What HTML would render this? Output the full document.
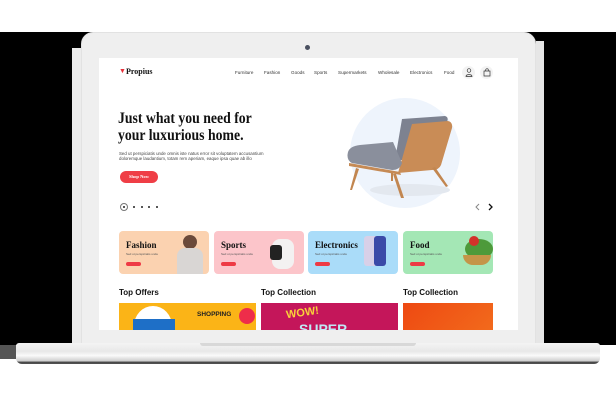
<!DOCTYPE html>
<html><head><meta charset="utf-8"><style>
*{margin:0;padding:0;box-sizing:border-box}
body{width:616px;height:400px;background:#fff;position:relative;overflow:hidden;font-family:"Liberation Sans",sans-serif}
.a{position:absolute}
.serif{font-family:"Liberation Serif",serif;font-weight:bold;color:#111}
.nav span{position:absolute;top:70px;font-size:4.6px;color:#333;white-space:nowrap}
.card{position:absolute;top:231px;width:90px;height:43px;border-radius:4px;overflow:hidden}
.card .t{position:absolute;left:7px;top:9px;font-family:"Liberation Serif",serif;font-weight:bold;font-size:9px;color:#111}
.card .s{position:absolute;left:7px;top:21px;font-size:3px;color:#555}
.card .b{position:absolute;left:7px;top:31px;width:15px;height:4px;border-radius:2px;background:#ee3a45}
.sec{position:absolute;top:288px;font-size:8px;font-weight:bold;color:#111}
</style></head><body>
<div class="a" style="left:0;top:32px;width:616px;height:313px;background:#000"></div>
<div class="a" style="left:0;top:345px;width:16px;height:14px;background:#555"></div>
<div class="a" style="left:72px;top:48px;width:9px;height:297px;background:#ececec"></div>
<div class="a" style="left:536px;top:41px;width:8px;height:304px;background:#e6e6e6"></div>
<div class="a" style="left:81px;top:32px;width:455px;height:313px;background:#efefef;border-radius:12px 12px 0 0;border:1px solid #e2e2e2"></div>
<div class="a" style="left:305px;top:45px;width:5px;height:5px;border-radius:50%;background:#4a5060"></div>
<div class="a" style="left:16px;top:343px;width:584px;height:21px;background:linear-gradient(#f4f4f4,#e8e8e8 40%,#fafafa 60%,#cfcfcf 85%,#444 92%,#555);border-radius:3px 3px 6px 6px"></div>
<div class="a" style="left:200px;top:343px;width:216px;height:3px;background:#d8d8d8;border-radius:0 0 4px 4px"></div>
<div class="a" style="left:99px;top:58px;width:419px;height:272px;background:#fff;overflow:hidden"></div>
<div class="a" style="left:119px;top:68px;color:#e8303a;font-size:7px">&#9660;</div>
<div class="a serif" style="left:126px;top:67px;font-size:8px">Propius</div>
<div class="nav">
<span style="left:235px">Furniture</span><span style="left:264px">Fashion</span><span style="left:291px">Goods</span><span style="left:314px">Sports</span><span style="left:338px">Supermarkets</span><span style="left:378px">Wholesale</span><span style="left:410px">Electronics</span><span style="left:444px">Food</span>
</div>
<div class="a" style="left:462px;top:66px;width:13px;height:13px;border-radius:50%;background:#f3f3f3"></div>
<svg class="a" style="left:465px;top:68px" width="8" height="9" viewBox="0 0 8 9"><circle cx="4" cy="2.5" r="1.8" fill="none" stroke="#333" stroke-width=".7"/><path d="M1 8.5c0-2.5 6-2.5 6 0z" fill="none" stroke="#333" stroke-width=".7"/></svg>
<div class="a" style="left:480px;top:66px;width:13px;height:13px;border-radius:50%;background:#f3f3f3"></div>
<svg class="a" style="left:483px;top:68px" width="8" height="9" viewBox="0 0 8 9"><path d="M1 3h6v5H1z M2.7 3V2a1.3 1.3 0 0 1 2.6 0v1" fill="none" stroke="#333" stroke-width=".7"/></svg>
<div class="a serif" style="left:118px;top:110px;font-size:16px;line-height:17px;white-space:nowrap;transform:scaleX(.86);transform-origin:left top">Just what you need for<br>your luxurious home.</div>
<div class="a" style="left:119px;top:151px;font-size:4.4px;line-height:5.4px;color:#444;white-space:nowrap">Sed ut perspiciatis unde omnis iste natus error sit voluptatem accusantium<br>doloremque laudantium, totam rem aperiam, eaque ipsa quae ab illo</div>
<div class="a" style="left:120px;top:171px;width:38px;height:12px;border-radius:6px;background:#ef3e46;color:#fff;font-family:'Liberation Serif',serif;font-size:4.6px;font-weight:bold;text-align:center;line-height:12px">Shop Now</div>
<div class="a" style="left:120px;top:203px;width:8px;height:8px;border-radius:50%;border:.7px solid #777"></div>
<div class="a" style="left:123px;top:206px;width:2px;height:2px;border-radius:50%;background:#222"></div>
<div class="a" style="left:133px;top:206px;width:2px;height:2px;border-radius:50%;background:#222"></div>
<div class="a" style="left:141px;top:206px;width:2px;height:2px;border-radius:50%;background:#222"></div>
<div class="a" style="left:148px;top:206px;width:2px;height:2px;border-radius:50%;background:#222"></div>
<div class="a" style="left:156px;top:206px;width:2px;height:2px;border-radius:50%;background:#222"></div>
<svg class="a" style="left:472px;top:202px" width="24" height="10"><path d="M7 2l-3 3 3 3" fill="none" stroke="#888" stroke-width="1"/><path d="M17 2l3 3-3 3" fill="none" stroke="#111" stroke-width="1.3"/></svg>
<svg class="a" style="left:340px;top:95px" width="130" height="120" viewBox="340 95 130 120">
<circle cx="405" cy="153" r="55" fill="#eef4fc"/>
<ellipse cx="410" cy="190" rx="40" ry="6" fill="#e3e8ef"/>
<path d="M402 119 L445 116 Q449 117 447 122 L441 129 L404 160 L395 160 Z" fill="#7d8290"/>
<path d="M412 124 L448 121 Q453 122 452 128 L441 165 Q439 170 432 170 L398 173 Z" fill="#c98c56"/>
<path d="M348 152 Q350 146 360 145 L393 142 L402 163 Q400 170 392 170 L352 163 Q346 160 348 152Z" fill="#8a8f9c"/>
<path d="M349 163 L400 172 L401 175 L349 166Z" fill="#c58a55"/>
<path d="M356 168 L350 190 L352 190 L359 169Z M393 174 L401 198 L404 198 L396 174Z M432 168 L446 187 L448 186 L435 167Z M391 173 L391 181 L393 181 L393 173Z" fill="#c28650"/>
</svg>
<div class="card" style="left:119px;background:#fbd2b0"><div class="t">Fashion</div><div class="s">Sed ut perspiciatis unde</div><div class="b"></div>
<div class="a" style="left:64px;top:4px;width:14px;height:14px;border-radius:50%;background:#6b4a3a"></div><div class="a" style="left:58px;top:17px;width:26px;height:26px;border-radius:8px 8px 0 0;background:#d9d6d4"></div></div>
<div class="card" style="left:214px;background:#fcc5ca"><div class="t">Sports</div><div class="s">Sed ut perspiciatis unde</div><div class="b"></div>
<div class="a" style="left:58px;top:8px;width:22px;height:30px;border-radius:8px;background:#f3f1f1"></div><div class="a" style="left:56px;top:14px;width:12px;height:15px;border-radius:3px;background:#222"></div></div>
<div class="card" style="left:308px;background:#aadcf9"><div class="t">Electronics</div><div class="s">Sed ut perspiciatis unde</div><div class="b"></div>
<div class="a" style="left:56px;top:5px;width:14px;height:30px;border-radius:3px;background:#d8d0e8"></div><div class="a" style="left:66px;top:5px;width:12px;height:30px;border-radius:3px;background:#3b4aa8"></div></div>
<div class="card" style="left:403px;background:#a4e7b5"><div class="t">Food</div><div class="s">Sed ut perspiciatis unde</div><div class="b"></div>
<div class="a" style="left:62px;top:8px;width:28px;height:20px;border-radius:50%;background:#4d9a3a"></div><div class="a" style="left:66px;top:5px;width:10px;height:10px;border-radius:50%;background:#d2332a"></div><div class="a" style="left:60px;top:24px;width:28px;height:10px;border-radius:0 0 10px 10px;background:#c49548"></div></div>
<div class="sec" style="left:119px">Top Offers</div>
<div class="sec" style="left:261px">Top Collection</div>
<div class="sec" style="left:403px">Top Collection</div>
<div class="a" style="left:119px;top:303px;width:137px;height:27px;background:#fbb417;overflow:hidden">
<div class="a" style="left:15px;top:3px;width:38px;height:40px;border-radius:50%;background:#fff"></div>
<div class="a" style="left:14px;top:16px;width:42px;height:14px;background:#1e6fc7"></div>
<div class="a" style="left:78px;top:8px;font-size:6.5px;font-weight:bold;color:#222">SHOPPING</div>
<div class="a" style="left:120px;top:5px;width:16px;height:16px;border-radius:50%;background:#ee2d4a"></div>
</div>
<div class="a" style="left:261px;top:303px;width:137px;height:27px;background:#c4165a;overflow:hidden">
<div class="a" style="left:25px;top:4px;font-size:11px;font-weight:bold;color:#f9d23a;transform:rotate(-8deg)">WOW!</div>
<div class="a" style="left:38px;top:18px;font-size:14px;font-weight:bold;color:#bfeaf5">SUPER</div>
</div>
<div class="a" style="left:403px;top:303px;width:90px;height:27px;background:linear-gradient(135deg,#ee4912,#f26a1c)"></div>
</body></html>
